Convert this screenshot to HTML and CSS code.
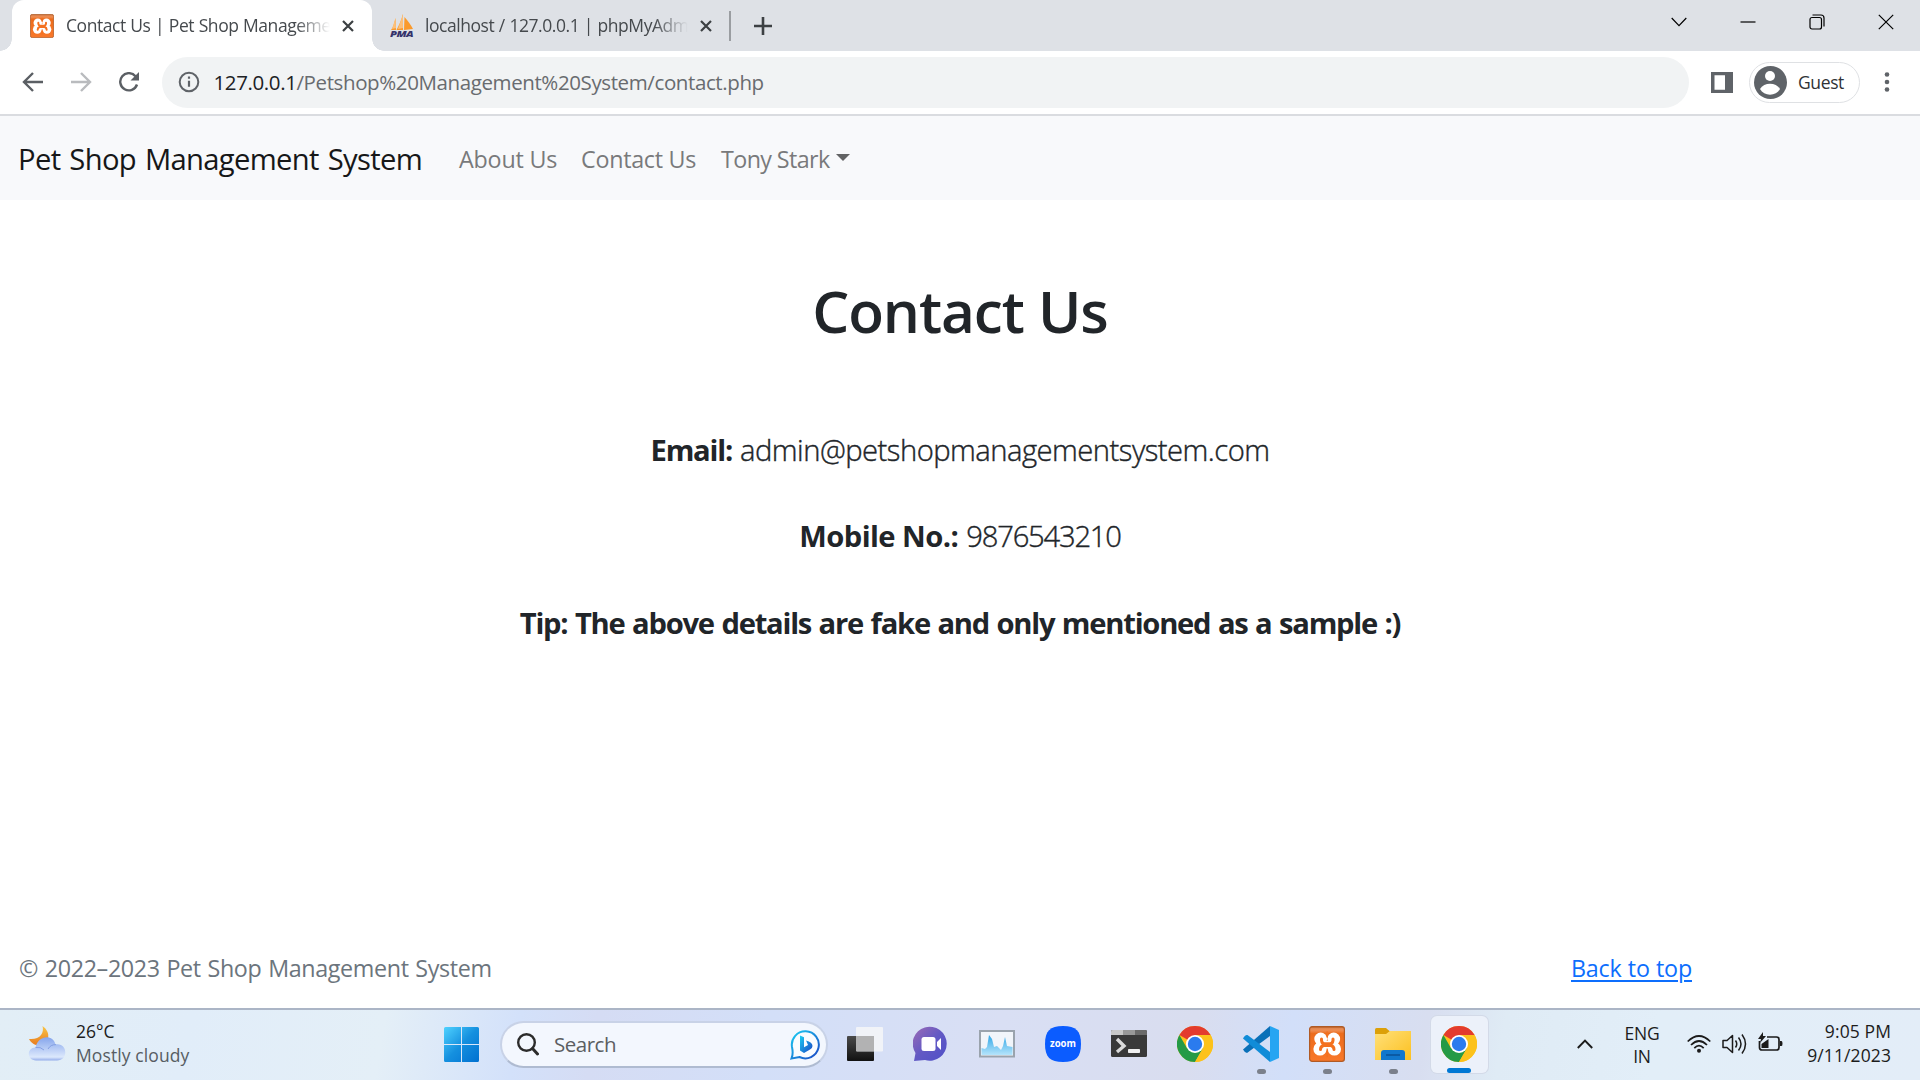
FILE: index.html
```html
<!DOCTYPE html>
<html lang="en">
<head>
<meta charset="utf-8">
<title>Contact Us | Pet Shop Management System</title>
<link rel="stylesheet" href="styles.css">
</head>
<body>
<svg class="defs" width="0" height="0" aria-hidden="true">
  <defs>
    <linearGradient id="orange" x1="0" y1="0" x2="0" y2="1"><stop offset="0" stop-color="#b85c20"/><stop offset=".06" stop-color="#e58b55"/><stop offset=".12" stop-color="#ef8a4c"/><stop offset=".2" stop-color="#ec6c1c"/><stop offset="1" stop-color="#f9782a"/></linearGradient>
    <linearGradient id="win" x1="0" y1="0" x2="1" y2="1"><stop offset="0" stop-color="#4fd2ff"/><stop offset=".5" stop-color="#1590df"/><stop offset="1" stop-color="#0070d0"/></linearGradient>
    <linearGradient id="moon" x1="0" y1="0" x2="0" y2="1"><stop offset="0" stop-color="#f8c647"/><stop offset="1" stop-color="#e87a1d"/></linearGradient>
    <linearGradient id="cloud" x1="0" y1="0" x2="0" y2="1"><stop offset="0" stop-color="#85a5ec"/><stop offset=".85" stop-color="#dce8fc"/><stop offset="1" stop-color="#93acea"/></linearGradient>
    <linearGradient id="bing" x1="0" y1="0" x2="1" y2="1"><stop offset="0" stop-color="#1bcdf3"/><stop offset="1" stop-color="#1a46c4"/></linearGradient>
    <linearGradient id="chat" x1="0" y1="0" x2="1" y2="1"><stop offset="0" stop-color="#9d6bb5"/><stop offset=".5" stop-color="#6259c4"/><stop offset="1" stop-color="#4f50c8"/></linearGradient>
    <linearGradient id="folder" x1="0" y1="0" x2="1" y2="1"><stop offset="0" stop-color="#ffe07a"/><stop offset="1" stop-color="#fcc01f"/></linearGradient>
    <linearGradient id="dark" x1="0" y1="0" x2="0" y2="1"><stop offset="0" stop-color="#4a4a4a"/><stop offset="1" stop-color="#111"/></linearGradient>
    <linearGradient id="wave" x1="0" y1="0" x2="0" y2="1"><stop offset="0" stop-color="#2fa6e6"/><stop offset="1" stop-color="#b5e4fb"/></linearGradient>
    <symbol id="xampp" viewBox="0 0 36 36">
      <rect x=".6" y=".6" width="34.8" height="34.8" rx="2.600" fill="url(#orange)" stroke="#b05a24" stroke-width="1.200"/>
      <g fill="#fff"><circle cx="11.700" cy="13" r="6.400"/><circle cx="24.700" cy="13" r="6.400"/><circle cx="11" cy="23" r="6.600"/><circle cx="25.400" cy="23" r="6.600"/><path d="M7.500 15h21.500v7.600h-21.500z"/></g>
      <path d="M12.500 13v1.500q.5 3.300 3 3.300h5.500q2.500 0 3-3.300V13" fill="none" stroke="#f4711f" stroke-width="3" stroke-linecap="round"/>
      <path d="M11.500 23.500q0-3 3-4h7.500q3 1 3 4" fill="none" stroke="#f4711f" stroke-width="3" stroke-linecap="round"/>
      <path d="M18.200 6v5M18.200 25.500v5" stroke="#f4711f" stroke-width="1.600" stroke-linecap="round"/>
    </symbol>
    <symbol id="chrome" viewBox="0 0 36 36">
      <circle cx="18" cy="18" r="18" fill="#fcc21b"/>
      <path d="M18 18L2.410 9A18 18 0 0 1 33.590 9z" fill="#e33b2e"/>
      <path d="M2.410 9A18 18 0 0 0 18 36L25.800 22.500L18 18L10.200 22.500z" fill="#249a46"/>
      <path d="M18 9H33.590A18 18 0 0 1 18 36L25.800 22.500z" fill="#fcc21b"/>
      <circle cx="18" cy="18" r="9" fill="#fff"/><circle cx="18" cy="18" r="7.200" fill="#2b7bee"/>
    </symbol>
  </defs>
</svg>

<div class="screen">
  <header class="tabstrip">
    <div class="tab tab-active">
      <svg class="favicon" width="24" height="24"><use href="#xampp"/></svg>
      <span class="tab-title">Contact Us | Pet Shop Manageme</span>
      <svg class="tab-close" width="12" height="12" viewBox="0 0 12 12"><path d="M1 1l10 10M11 1L1 11" stroke="#3c4043" stroke-width="2.200"/></svg>
    </div>
    <div class="tab tab-idle">
      <svg class="favicon" width="24" height="24" viewBox="0 0 24 24"><path d="M1 16C3.500 13 4.500 8 5.500 4l.5 12zM6.500 16C9 11 11.500 6 13 0v16zM14 16L14.500 3C18 7 21 11 23 15z" fill="#fa9a2c"/><path d="M5.500 4L2 15l4-1zM13 0L8 15l5-1z" fill="#fcc07b"/><text class="pma" x="0" y="23" textLength="23" lengthAdjust="spacingAndGlyphs">PMA</text></svg>
      <span class="tab-title">localhost / 127.0.0.1 | phpMyAdm</span>
      <svg class="tab-close" width="12" height="12" viewBox="0 0 12 12"><path d="M1 1l10 10M11 1L1 11" stroke="#3c4043" stroke-width="2.200"/></svg>
    </div>
    <span class="tab-divider"></span>
    <svg class="new-tab" width="18" height="18" viewBox="0 0 18 18"><path d="M9 0v18M0 9h18" stroke="#3c4043" stroke-width="2.600"/></svg>
    <div class="window-controls">
      <svg width="16" height="16" viewBox="0 0 16 16"><path d="M.7 4L8 11.700L15.300 4"/></svg>
      <svg width="16" height="16" viewBox="0 0 16 16"><path d="M.5 8h15"/></svg>
      <svg width="16" height="16" viewBox="0 0 16 16"><rect x="1" y="3.500" width="11.500" height="11.500" rx="2"/><path d="M3.500 1H12q3 0 3 3v8.500"/></svg>
      <svg width="16" height="16" viewBox="0 0 16 16"><path d="M.8.8l14.400 14.400M15.200.8L.8 15.200"/></svg>
    </div>
  </header>

  <div class="toolbar">
    <div class="nav-buttons">
      <svg width="22" height="20" viewBox="0 0 22 20"><path d="M21 10H2M11 1L2 10l9 9" fill="none" stroke="#5b5f64" stroke-width="2.400"/></svg>
      <svg width="22" height="20" viewBox="0 0 22 20"><path d="M1 10h19M11 1l9 9-9 9" fill="none" stroke="#b9bbbe" stroke-width="2.400"/></svg>
      <svg width="22" height="20" viewBox="0 0 22 20"><path d="M17.500 4.300A8.600 8.600 0 1 0 19 12.500" fill="none" stroke="#5b5f64" stroke-width="2.400"/><path d="M21 0v8.500h-8.500z" fill="#5b5f64"/></svg>
    </div>
    <div class="omnibox">
      <svg width="22" height="22" viewBox="0 0 22 22"><circle cx="11" cy="11" r="9.300" fill="none" stroke="#5f6368" stroke-width="2"/><path d="M11 9.800v6M11 5.600v2.200" stroke="#5f6368" stroke-width="2.200"/></svg>
      <span class="url"><b class="host">127.0.0.1</b>/Petshop%20Management%20System/contact.php</span>
    </div>
    <svg class="side-panel" width="22" height="21" viewBox="0 0 22 21"><path fill-rule="evenodd" d="M0 0h22v21H0zM3.500 3.200v14.600h10.500V3.200z" fill="#5f6368"/></svg>
    <div class="profile">
      <svg width="33" height="33" viewBox="0 0 33 33"><circle cx="16.500" cy="16.500" r="16.500" fill="#5f6368"/><circle cx="16" cy="10" r="5" fill="#fff"/><path d="M6 23C10 16 22 16 26 23C22 30.500 10 30.500 6 23z" fill="#fff"/></svg>
      <span class="guest">Guest</span>
    </div>
    <svg class="menu-dots" width="6" height="20" viewBox="0 0 6 20"><g fill="#5f6368"><circle cx="3" cy="2.500" r="2.300"/><circle cx="3" cy="10" r="2.300"/><circle cx="3" cy="17.500" r="2.300"/></g></svg>
  </div>

  <nav class="navbar">
    <span class="brand">Pet Shop Management System</span>
    <span class="nav-link about">About Us</span>
    <span class="nav-link contact">Contact Us</span>
    <span class="nav-link user">Tony Stark</span>
    <span class="caret"></span>
  </nav>

  <main class="page">
    <h1 class="title">Contact Us</h1>
    <p class="lead"><strong class="k-email">Email:</strong><span class="v-email">admin@petshopmanagementsystem.com</span></p>
    <p class="lead"><strong class="k-mobile">Mobile No.:</strong><span class="v-mobile">9876543210</span></p>
    <p class="lead"><strong class="tip">Tip: The above details are fake and only mentioned as a sample :)</strong></p>
    <footer class="footer">
      <span>© 2022–2023 Pet Shop Management System</span>
      <a class="top-link" href="#">Back to top</a>
    </footer>
  </main>

  <div class="taskbar">
    <div class="weather">
      <svg width="38" height="36" viewBox="0 0 38 36"><path d="M14.500 0C16.500 7 12 14 1 13C4 19 11 21 16 18C21 15 23 6 14.500 0z" fill="url(#moon)"/><path d="M8 34.500C-1.500 34.500-1.500 21.500 7.500 21.500C10 9 25 8 27.500 18.500C40 16.500 40.500 34.500 29 34.500z" fill="url(#cloud)"/><path d="M7.500 21.500q5-1 8.500 2.500M20 23q2.500-4.500 8-4.400" fill="none" stroke="#7f9be0" stroke-width=".9"/></svg>
      <div class="weather-text"><span class="temp">26°C</span><span class="sky">Mostly cloudy</span></div>
    </div>
    <div class="apps">
      <div class="app"><svg width="35" height="35" viewBox="0 0 35 35"><path fill="url(#win)" d="M1.500 0H17v17H0V1.500Q0 0 1.500 0zM18 0h15.500Q35 0 35 1.500V17H18zM0 18h17v17H1.500Q0 35 0 33.500zM18 18h17v15.500q0 1.500-1.500 1.500H18z"/></svg></div>
      <div class="search">
        <svg width="22" height="23" viewBox="0 0 22 23"><circle cx="9.500" cy="9.500" r="8.300" fill="none" stroke="#2b2b2b" stroke-width="2.400"/><path d="M15.500 15.500l5 5.500" stroke="#2b2b2b" stroke-width="3" stroke-linecap="round"/></svg>
        <span class="search-text">Search</span>
        <svg class="bing" width="31" height="31" viewBox="0 0 31 31"><path d="M2 18A13.500 13.500 0 1 1 9.500 28L1.500 29.500Q3.500 25 2 18z" fill="#fafcff" stroke="url(#bing)" stroke-width="2"/><path d="M10 6.500l4 1.700v10l4-2.200-2-4.500q6.500 1.500 6.500 5.500 0 2-2.500 3.500l-6 3.500-4-2.500z" fill="url(#bing)"/></svg>
      </div>
      <div class="app"><svg width="36" height="36" viewBox="0 0 36 36"><rect x="0" y="10" width="27" height="25" rx="1" fill="url(#dark)"/><rect x="9" y="1" width="27" height="24.500" rx="1" fill="#f3f4f7" fill-opacity=".93"/><path d="M9 10h18v15H9z" fill="#b2b2b3"/></svg></div>
      <div class="app"><svg width="36" height="36" viewBox="0 0 36 36"><path d="M1 35L2.500 27A17 17 0 1 1 12 34z" fill="url(#chat)"/><rect x="8.500" y="11" width="14" height="14" rx="2.500" fill="#fff"/><path d="M24 16l4-4v12l-4-4z" fill="#fff"/></svg></div>
      <div class="app"><svg width="36" height="36" viewBox="0 0 36 36"><rect x="1" y="5" width="34" height="25.500" fill="#f1f5fa" stroke="#9aa3ad" stroke-width="2"/><path d="M2.500 22L6 23l2-2 2-12 3 4 2 8 3-1 4 4 2-4 2-9 2 9 5.500 1v8H2.500z" fill="url(#wave)"/></svg></div>
      <div class="app"><svg width="36" height="36" viewBox="0 0 36 36"><path d="M18 0C31 0 36 5 36 18S31 36 18 36 0 31 0 18 5 0 18 0z" fill="#0b5cff"/><text class="zoom" x="5" y="21" textLength="26" lengthAdjust="spacingAndGlyphs">zoom</text></svg></div>
      <div class="app"><svg width="36" height="36" viewBox="0 0 36 36"><rect x="0" y="4" width="36" height="27" rx="1.500" fill="#393939"/><path d="M0 9V5.500Q0 4 1.500 4H12v5z" fill="#c8c8c8"/><path d="M12 4h12v5H12z" fill="#989898"/><path d="M24 4h10.500Q36 4 36 5.500V9H24z" fill="#6a6a6a"/><path d="M6 13l7 7-7 6" fill="none" stroke="#dadada" stroke-width="3.400"/><rect x="17" y="23" width="12" height="4" rx=".8" fill="#efefef"/></svg></div>
      <div class="app"><svg width="36" height="36"><use href="#chrome"/></svg></div>
      <div class="app"><svg width="36" height="36" viewBox="0 0 36 36"><path d="M0 23.500L27 0v10L4 27q-2 0-4-3.500z" fill="#0a70b8"/><path d="M0 12.500Q2 8.500 4.500 9L27 26v10z" fill="#108cd8"/><path d="M27 0l9 4v28l-9 4z" fill="#26a5f2"/></svg><i class="dot"></i></div>
      <div class="app"><svg width="36" height="36"><use href="#xampp"/></svg><i class="dot"></i></div>
      <div class="app"><svg width="36" height="36" viewBox="0 0 36 36"><path d="M0 9V3.500Q0 2 1.500 2H11l4 3.500L11 9z" fill="#dca009"/><path d="M0 8h11l4-3h21v29H0z" fill="url(#folder)"/><path d="M6 34v-7q0-3 3-3h18q3 0 3 3v7z" fill="#1177cd"/><path d="M11 29h14" stroke="#0b549a" stroke-width="1.600"/></svg><i class="dot"></i></div>
      <div class="app app-active"><svg width="36" height="36"><use href="#chrome"/></svg><i class="dot"></i></div>
    </div>
    <div class="tray">
      <svg class="more" width="16" height="10" viewBox="0 0 16 10"><path d="M.8 9L8 1.500 15.200 9" fill="none" stroke="#1b1b1b" stroke-width="1.900"/></svg>
      <div class="lang"><span>ENG</span><span>IN</span></div>
      <svg class="wifi" width="24" height="18" viewBox="0 0 24 18"><g fill="none" stroke="#1b1b1b" stroke-width="1.700"><path d="M.7 6.500q11.300-11 22.600 0"/><path d="M4 10q8-8 16 0"/><path d="M7.300 13.200q4.700-5 9.400 0"/></g><circle cx="12" cy="15.700" r="2" fill="#1b1b1b"/></svg>
      <svg class="sound" width="25" height="22" viewBox="0 0 25 22"><g fill="none" stroke="#1b1b1b" stroke-width="1.500"><path d="M1 7.500h4L10.500 2.500v17L5 14.500H1z" stroke-linejoin="round"/><path d="M13.500 7.500q2.500 3.500 0 7M16.500 4.500q5 6.500 0 13M20 1.500q7 9.500 0 19"/></g></svg>
      <svg class="battery" width="25" height="20" viewBox="0 0 25 20"><path d="M9 5h9.500q2.500 0 2.500 2.500v8q0 2.500-2.500 2.500H4q-2.500 0-2.500-2.500V9" fill="none" stroke="#1b1b1b" stroke-width="1.700"/><path d="M22 9h1.500q1 0 1 2.500t-1 2.500H22zM3.500 16v-4l7-5v9zM5 0L0 7h3l-1 4 6-7H5z" fill="#1b1b1b"/></svg>
      <div class="clock"><span>9:05 PM</span><span>9/11/2023</span></div>
    </div>
  </div>
</div>
</body>
</html>
```
FILE: styles.css
```css
* { box-sizing: border-box; }
body { margin: 0; font-family: "Open Sans", "Noto Sans", sans-serif; color: #212529; }
svg { display: block; flex: none; }
.defs { position: absolute; }
.screen { width: 1920px; height: 1080px; display: flex; flex-direction: column; overflow: hidden; background: #fff; white-space: nowrap; }

/* Browser tabs */
.tabstrip { height: 51px; flex: none; display: flex; align-items: center; background: #dee1e6; padding-left: 12px; }
.tab { display: flex; align-items: center; height: 51px; font-size: 17.5px; line-height: 26px; letter-spacing: -.45px; word-spacing: .5px; color: #45494d; }
.tab-active { position: relative; width: 360px; padding: 0 0 0 18px; background: #fff; border-radius: 12px 12px 0 0; }
.tab-active::before, .tab-active::after { content: ""; position: absolute; bottom: 0; width: 12px; height: 12px; }
.tab-active::before { left: -12px; background: radial-gradient(circle at 0 0, transparent 11.500px, #fff 12px); }
.tab-active::after { right: -12px; background: radial-gradient(circle at 100% 0, transparent 11.500px, #fff 12px); }
.tab-idle { width: 357px; padding-left: 18px; }
.tab-title { width: 264px; margin: -1px 0 0 12px; overflow: hidden; -webkit-mask-image: linear-gradient(90deg, #000 87%, transparent 100%); mask-image: linear-gradient(90deg, #000 87%, transparent 100%); }
.tab-idle .tab-title { margin-left: 11px; width: 263px; }
.tab-close { margin-left: 12px; }
.pma { font: italic 800 8.500px "Open Sans", sans-serif; fill: #35336b; }
.tab-divider { width: 2px; height: 30px; background: #9a9da1; }
.new-tab { margin-left: 23px; }
.window-controls { margin-left: auto; align-self: flex-start; display: flex; height: 43px; align-items: center; }
.window-controls svg { margin: 0 26.500px; fill: none; stroke: #000; stroke-width: 1.200; overflow: visible; }

/* Address bar */
.toolbar { height: 65px; flex: none; display: flex; align-items: center; padding: 0 30px 1px 22px; border-bottom: 2px solid #dadce0; }
.nav-buttons { display: flex; gap: 26px; width: 140px; }
.omnibox { width: 1527px; height: 51px; border-radius: 26px; background: #f1f3f4; display: flex; align-items: center; padding-left: 16px; }
.url { margin-left: 13.500px; font-size: 20.500px; line-height: 30px; letter-spacing: -.39px; color: #686b6f; }
.host { font-weight: 400; color: #202124; }
.side-panel { margin-left: 22px; }
.profile { margin-left: 16px; width: 111px; height: 41px; border: 1.500px solid #dfe1e4; border-radius: 21px; display: flex; align-items: center; padding-left: 4px; }
.guest { margin-left: 11px; font-size: 17.500px; letter-spacing: -.375px; color: #303236; }
.menu-dots { margin-left: auto; }

/* Site navigation */
.navbar { height: 84px; flex: none; display: flex; align-items: center; background: #f8f9fb; padding: 1px 0 0 18px; font-size: 23.300px; color: #797a7b; }
.brand { width: 441px; font-size: 29.200px; letter-spacing: -.66px; word-spacing: 2px; color: #161718; }
.about { width: 122px; letter-spacing: -.2px; }
.contact { width: 140px; letter-spacing: -.28px; }
.user { width: 115px; letter-spacing: -.6px; }
.caret { border: 7px solid transparent; border-top-color: #626364; border-bottom: 0; margin-bottom: 2px; }

/* Page content */
.page { flex: 1; display: flex; flex-direction: column; align-items: center; padding-top: 74px; }
.title { margin: 0 0 82px; font-size: 58.500px; font-weight: 600; line-height: 72px; letter-spacing: -1.080px; }
.lead { margin: 0 0 41.400px; font-size: 29.200px; font-weight: 300; line-height: 45px; display: flex; gap: 8px; }
.lead span { -webkit-text-stroke: .4px #212529; }
.lead strong { font-weight: 700; }
.k-email { letter-spacing: -1.200px; }
.v-email { letter-spacing: -.52px; }
.k-mobile { letter-spacing: -.55px; }
.v-mobile { letter-spacing: -1.220px; }
.tip { letter-spacing: -1.240px; word-spacing: 1.200px; }
.footer { margin-top: auto; width: 100%; padding: 0 228px 22px 19px; display: flex; justify-content: space-between; font-size: 23.300px; line-height: 36px; letter-spacing: -.37px; word-spacing: 1.100px; color: #6c757d; }
.top-link { color: #0d6efd; letter-spacing: -.2px; word-spacing: .4px; text-decoration-thickness: 2px; text-underline-offset: 3px; }

/* Taskbar */
.taskbar { height: 72px; flex: none; display: flex; border-top: 2px solid #abb5c6; font-size: 17.500px; line-height: 24px; color: #1c1c1c; background: linear-gradient(100deg, #e2eef6 0, #e1edf9 10%, #e4eff7 20%, #d3e1fa 27%, #d5dcf4 31%, #d3dff8 40%, #d9dff4 52%, #d9ddef 62%, #d2dff9 67%, #d8def0 74%, #dfebf5 78%, #e2eef8 86%, #e3edf8 100%); }
.weather { width: 428px; display: flex; padding: 16px 0 0 28px; }
.weather-text, .lang, .clock { display: flex; flex-direction: column; }
.weather-text { margin: -7px 0 0 10px; }
.sky { color: #575d63; letter-spacing: .1px; }
.apps { display: flex; align-items: center; width: 1064px; height: 68px; }
.app { position: relative; width: 66px; height: 57px; display: grid; place-items: center; }
.search { width: 328px; height: 47px; margin: 0 4px 0 6px; display: flex; align-items: center; padding: 0 5px 0 15px; background: #f3f7fe; border: 2px solid #c8d2e7; border-bottom-color: #afbbd1; border-radius: 24px; font-size: 20.500px; letter-spacing: -.48px; color: #5b5e62; }
.search-text { margin-left: 15px; }
.bing { margin-left: auto; }
.zoom { font: 700 11px "Open Sans", sans-serif; letter-spacing: 0; fill: #fff; }
.app-active { width: 57px; margin-left: 4.500px; background: #ecf1fa; border-radius: 6px; box-shadow: 0 0 0 1px #d3dae8; }
.dot { position: absolute; bottom: -1px; left: 50%; width: 9px; height: 5px; margin-left: -4.500px; border-radius: 3px; background: #7b808b; }
.app-active .dot { width: 24px; margin-left: -12px; background: #0078d4; bottom: 0; }
.tray { flex: 1; display: flex; align-items: flex-start; padding: 0 29px 0 85px; }
.more { margin-top: 29px; }
.lang { margin: 12px 0 0 31px; width: 36px; align-items: center; letter-spacing: -.2px; line-height: 23px; }
.wifi { margin: 25px 0 0 27px; }
.sound { margin: 23px 0 0 11px; }
.battery { margin: 22px 0 0 11px; }
.clock { margin: 9px 0 0 auto; text-align: right; letter-spacing: .1px; }
```
